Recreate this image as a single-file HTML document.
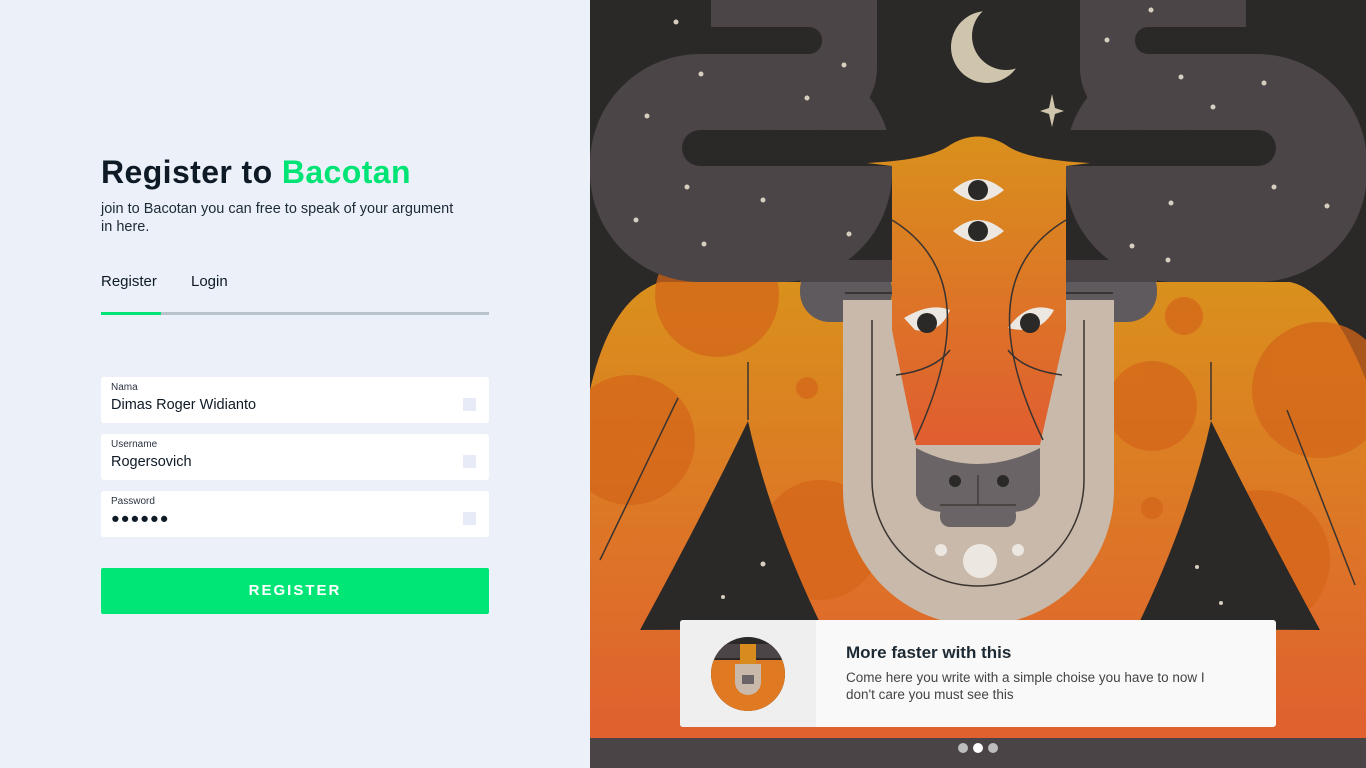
<!DOCTYPE html>
<html><head><meta charset="utf-8"><style>
*{margin:0;padding:0;box-sizing:border-box}
body{width:1366px;height:768px;overflow:hidden;background:#ecf1f9;font-family:"Liberation Sans",sans-serif;position:relative}
.left{position:absolute;left:0;top:0;width:590px;height:768px;background:#ecf1f9}
h1{position:absolute;left:101px;top:154px;font-size:32px;font-weight:bold;color:#0e1a26;letter-spacing:0.4px}
h1 span{color:#00e375}
.sub{position:absolute;left:101px;top:200px;width:360px;font-size:14.5px;line-height:18px;color:#1d2a36}
.tab{position:absolute;top:273px;font-size:15px;color:#0e1a26}
.line{position:absolute;left:101px;top:312px;width:388px;height:3px;background:#b7c4cc}
.line i{position:absolute;left:0;top:0;width:60px;height:3px;background:#00e375}
.inp{position:absolute;left:101px;width:388px;height:46px;background:#fff;border-radius:3px}
.inp .l{position:absolute;left:10px;top:5px;font-size:10px;color:#2a3440}
.inp .v{position:absolute;left:10px;top:20px;font-size:14.5px;color:#0e1a26}
.inp .s{position:absolute;left:362px;top:21px;width:13px;height:13px;background:#e6ebf7}
.btn{position:absolute;left:101px;top:568px;width:388px;height:46px;background:#00e676;border-radius:2px;color:#fff;font-weight:bold;font-size:15px;letter-spacing:2px;text-align:center;line-height:46px}
.card{position:absolute;left:680px;top:620px;width:596px;height:107px;background:#f9f9f9;border-radius:3px;overflow:hidden}
.card .pic{position:absolute;left:0;top:0;width:136px;height:107px;background:#efefef}
.card h3{position:absolute;left:166px;top:23px;font-size:17px;color:#1e2a33}
.card p{position:absolute;left:166px;top:49px;width:390px;font-size:13.5px;line-height:17px;color:#444}
</style></head><body>
<div class="left">
<h1>Register to <span>Bacotan</span></h1>
<div class="sub">join to Bacotan you can free to speak of your argument in here.</div>
<div class="tab" style="left:101px">Register</div>
<div class="tab" style="left:191px">Login</div>
<div class="line"><i></i></div>
<div class="inp" style="top:377px"><div class="l">Nama</div><div class="v">Dimas Roger Widianto</div><div class="s"></div></div>
<div class="inp" style="top:434px"><div class="l">Username</div><div class="v">Rogersovich</div><div class="s"></div></div>
<div class="inp" style="top:491px"><div class="l">Password</div><div class="v" style="letter-spacing:1px">●●●●●●</div><div class="s"></div></div>
<div class="btn">REGISTER</div>
</div>
<svg style="position:absolute;left:590px;top:0" width="776" height="768" viewBox="590 0 776 768">
<defs><linearGradient id="og" x1="0" y1="0" x2="0" y2="1"><stop offset="0" stop-color="#d9901c"/><stop offset="1" stop-color="#e05d30"/></linearGradient></defs>
<rect x="590" y="0" width="776" height="768" fill="#2b2927"/>
<path d="M590 390 Q610 300 660 282 L1290 282 Q1330 290 1366 380 L1366 768 L590 768 Z" fill="url(#og)"/>
<g fill="#d4661a" opacity=".75">
<circle cx="717" cy="295" r="62"/><circle cx="630" cy="440" r="65"/><circle cx="807" cy="388" r="11"/>
<circle cx="1152" cy="406" r="45"/><circle cx="1320" cy="390" r="68"/><circle cx="1184" cy="316" r="19"/>
<circle cx="1260" cy="560" r="70"/><circle cx="1152" cy="508" r="11"/><circle cx="820" cy="540" r="60"/>
</g>
<path d="M748 421 Q770 520 823 629 L640 630 Q700 520 748 421 Z" fill="#2b2927"/>
<path d="M1211 421 Q1189 520 1136 629 L1320 630 Q1260 520 1211 421 Z" fill="#2b2927"/>
<rect x="590" y="738" width="776" height="30" fill="#4a4446"/>
<g fill="#4b4547">
<rect x="590" y="54" width="302" height="228" rx="110"/>
<rect x="711" y="-100" width="166" height="230" rx="62"/>
<rect x="560" y="27" width="262" height="27" rx="13" fill="#2b2927"/>
<rect x="800" y="260" width="92" height="62" rx="30" fill="#5f5a5d"/>
<rect x="800" y="260" width="92" height="22" fill="#4b4547"/>
</g>
<g transform="translate(1957,0) scale(-1,1)" fill="#4b4547">
<rect x="590" y="54" width="302" height="228" rx="110"/>
<rect x="711" y="-100" width="166" height="230" rx="62"/>
<rect x="560" y="27" width="262" height="27" rx="13" fill="#2b2927"/>
<rect x="800" y="260" width="92" height="62" rx="30" fill="#5f5a5d"/>
<rect x="800" y="260" width="92" height="22" fill="#4b4547"/>
</g>
<rect x="682" y="130" width="594" height="36" rx="18" fill="#2b2927"/>
<path d="M845 293 L892 293 M1066 293 L1113 293" stroke="#2b2927" stroke-width="1.5"/>
<path d="M843 300 L1114 300 L1114 490 A135 135 0 0 1 843 490 Z" fill="#c8b9aa"/>
<path d="M872 320 L872 480 A106 106 0 0 0 1084 480 L1084 320" fill="none" stroke="#3a3330" stroke-width="1.5"/>
<path d="M867 163 Q930 160 950 145 Q978 128 1006 145 Q1026 160 1090 163 L1066 166 L1066 330 Q1050 400 1040 445 L916 445 Q906 400 892 330 L892 166 Z" fill="url(#og)"/>
<path d="M916 448 Q978 480 1040 448 L1040 495 Q1035 512 1010 512 L946 512 Q920 512 916 495 Z" fill="#6a6466"/>
<rect x="940" y="505" width="76" height="22" rx="10" fill="#6a6466"/>
<path d="M978 475 L978 505 M940 505 L1016 505" stroke="#3a3330" stroke-width="1.2"/>
<circle cx="955" cy="481" r="6" fill="#2b2927"/><circle cx="1003" cy="481" r="6" fill="#2b2927"/>
<g fill="#ece7e1"><path d="M953 190 Q978 168 1004 190 Q978 212 953 190Z"/><path d="M953 231 Q978 209 1004 231 Q978 253 953 231Z"/>
<path d="M904 318 Q930 302 950 310 Q940 335 915 330Z"/><path d="M1054 310 Q1028 300 1008 328 Q1040 336 1054 310Z"/>
<circle cx="980" cy="561" r="17"/><circle cx="941" cy="550" r="6"/><circle cx="1018" cy="550" r="6"/></g>
<g fill="#2b2927"><circle cx="978" cy="190" r="10"/><circle cx="978" cy="231" r="10"/><circle cx="927" cy="323" r="10"/><circle cx="1030" cy="323" r="10"/></g>
<g fill="none" stroke="#3a3330" stroke-width="1.5">
<path d="M892 220 Q990 280 915 440"/><path d="M1066 220 Q966 280 1043 440"/>
<path d="M896 375 Q935 370 950 350"/><path d="M1062 375 Q1023 370 1008 350"/>
<path d="M678 398 L600 560"/><path d="M1287 410 L1355 585"/><path d="M748 362 L748 420"/><path d="M1211 362 L1211 420"/>
</g>
<circle cx="987" cy="47" r="36" fill="#cfc5ad"/><circle cx="1006" cy="36" r="34" fill="#2b2927"/>
<path d="M1052 94 L1055 108 L1064 111 L1055 114 L1052 127 L1049 114 L1040 111 L1049 108Z" fill="#cfc5ad"/>
<g fill="#d8cec0"><circle cx="676" cy="22" r="2.5"/><circle cx="701" cy="74" r="2.5"/><circle cx="844" cy="65" r="2.5"/><circle cx="807" cy="98" r="2.5"/><circle cx="647" cy="116" r="2.5"/><circle cx="687" cy="187" r="2.5"/><circle cx="763" cy="200" r="2.5"/><circle cx="636" cy="220" r="2.5"/><circle cx="704" cy="244" r="2.5"/><circle cx="849" cy="234" r="2.5"/><circle cx="1151" cy="10" r="2.5"/><circle cx="1107" cy="40" r="2.5"/><circle cx="1181" cy="77" r="2.5"/><circle cx="1264" cy="83" r="2.5"/><circle cx="1213" cy="107" r="2.5"/><circle cx="1274" cy="187" r="2.5"/><circle cx="1171" cy="203" r="2.5"/><circle cx="1327" cy="206" r="2.5"/><circle cx="1168" cy="260" r="2.5"/><circle cx="1132" cy="246" r="2.5"/><circle cx="763" cy="564" r="2.5"/><circle cx="1197" cy="567" r="2"/><circle cx="1221" cy="603" r="2"/><circle cx="723" cy="597" r="2"/></g>
</svg>
<div class="card"><div class="pic"><svg width="136" height="107"><circle cx="68" cy="54" r="37" fill="#2b2927"/><clipPath id="c"><circle cx="68" cy="54" r="37"/></clipPath><g clip-path="url(#c)"><rect x="30" y="40" width="76" height="60" fill="#e07a22"/><rect x="30" y="24" width="76" height="14" fill="#4b4547"/><rect x="60" y="24" width="16" height="40" fill="#d98c1e"/><path d="M55 44 L81 44 L81 62 A13 13 0 0 1 55 62Z" fill="#c8b9aa"/><rect x="62" y="55" width="12" height="9" fill="#6a6466"/></g></svg></div>
<h3>More faster with this</h3>
<p>Come here you write with a simple choise you have to now I don't care you must see this</p></div>
<div style="position:absolute;left:958px;top:743px;width:10px;height:10px;border-radius:50%;background:#bdbdbd"></div>
<div style="position:absolute;left:973px;top:743px;width:10px;height:10px;border-radius:50%;background:#fff"></div>
<div style="position:absolute;left:988px;top:743px;width:10px;height:10px;border-radius:50%;background:#bdbdbd"></div>
</body></html>
